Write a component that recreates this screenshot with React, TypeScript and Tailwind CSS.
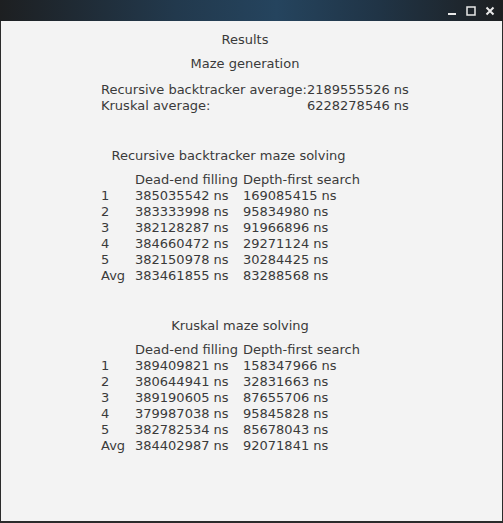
const FONT = { fontFamily: '"DejaVu Sans", "Liberation Sans", sans-serif' };

const RB_ROWS = [
  ["1", "385035542 ns", "169085415 ns"],
  ["2", "383333998 ns", "95834980 ns"],
  ["3", "382128287 ns", "91966896 ns"],
  ["4", "384660472 ns", "29271124 ns"],
  ["5", "382150978 ns", "30284425 ns"],
  ["Avg", "383461855 ns", "83288568 ns"],
];

const KR_ROWS = [
  ["1", "389409821 ns", "158347966 ns"],
  ["2", "380644941 ns", "32831663 ns"],
  ["3", "389190605 ns", "87655706 ns"],
  ["4", "379987038 ns", "95845828 ns"],
  ["5", "382782534 ns", "85678043 ns"],
  ["Avg", "384402987 ns", "92071841 ns"],
];

function SolveTable({ title, rows, titleBox }: { title: string; rows: string[][]; titleBox: string }) {
  return (
    <div className="mt-[34px]">
      <div className={`text-center ${titleBox}`}>{title}</div>
      <div className="mt-[8px] grid grid-cols-[34px_108px_auto] pl-[100px]">
        <div />
        <div className="whitespace-nowrap">Dead-end filling</div>
        <div className="whitespace-nowrap">Depth-first search</div>
        {rows.map(([label, a, b]) => (
          <div key={label} className="contents">
            <div>{label}</div>
            <div className="whitespace-nowrap">{a}</div>
            <div className="whitespace-nowrap">{b}</div>
          </div>
        ))}
      </div>
    </div>
  );
}

export default function App() {
  return (
    <div className="flex h-[523px] w-[503px] flex-col bg-[#2b2b2b]" style={FONT}>
      <div className="flex h-[21px] items-center justify-end gap-[9px] bg-[linear-gradient(90deg,#1d1f21_0%,#22394d_35%,#25445e_55%,#203446_75%,#1d1f21_100%)] pr-[8px]">
        <svg width="10" height="10" viewBox="0 0 10 10">
          <rect x="1" y="7" width="8" height="2" fill="#e8e8e8" />
        </svg>
        <svg width="10" height="10" viewBox="0 0 10 10">
          <rect x="1" y="1" width="8" height="8" fill="none" stroke="#e8e8e8" strokeWidth="1.5" />
        </svg>
        <svg width="10" height="10" viewBox="0 0 10 10">
          <path d="M1.5 1.5 L8.5 8.5 M8.5 1.5 L1.5 8.5" stroke="#e8e8e8" strokeWidth="2" />
        </svg>
      </div>
      <div className="mx-[1px] mb-[2px] flex-1 bg-[#f3f3f3] pt-[11px] text-[13px] leading-[16px] text-[#3a3a3a]">
        <div className="w-[488px] text-center">Results</div>
        <div className="mt-[8px] w-[488px] text-center">Maze generation</div>
        <div className="mt-[10px] grid w-fit grid-cols-[auto_auto] pl-[100px]">
          <div className="whitespace-nowrap">Recursive backtracker average:</div>
          <div className="whitespace-nowrap text-right">2189555526 ns</div>
          <div className="whitespace-nowrap">Kruskal average:</div>
          <div className="whitespace-nowrap text-right">6228278546 ns</div>
        </div>
        <SolveTable title="Recursive backtracker maze solving" rows={RB_ROWS} titleBox="w-[455px]" />
        <SolveTable title="Kruskal maze solving" rows={KR_ROWS} titleBox="w-[478px]" />
      </div>
    </div>
  );
}
